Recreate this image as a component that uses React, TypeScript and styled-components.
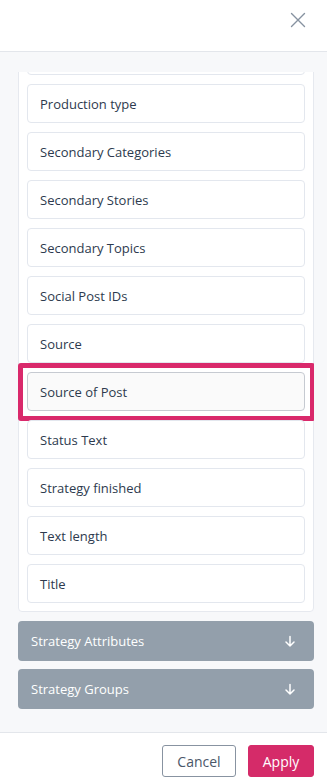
import React, {useLayoutEffect, useRef} from 'react';
import styled, {createGlobalStyle} from 'styled-components';

const GlobalStyle = createGlobalStyle`
    html, body {
        margin: 0;
        padding: 0;
        background: #fff;
    }
    body {
        font-family: "Open Sans", "Noto Sans", sans-serif;
        -webkit-font-smoothing: antialiased;
    }
`;

const Page = styled.div`
    width: 327px;
    height: 780px;
    display: flex;
    flex-direction: column;
    overflow: hidden;
    background: #fff;
`;

const Header = styled.header`
    height: 52px;
    flex: none;
    display: flex;
    align-items: flex-start;
    justify-content: flex-end;
    border-bottom: 1px solid #e3e6eb;
    padding: 12px 21px 0 0;
    box-sizing: border-box;
`;

const CloseButton = styled.button`
    border: 0;
    background: none;
    padding: 0;
    width: 16px;
    height: 16px;
    cursor: pointer;
    display: flex;
`;

const Body = styled.div`
    flex: 1;
    background: #f7f8fa;
    padding: 20px 13px 23px 18px;
    display: flex;
    flex-direction: column;
    gap: 8px;
    min-height: 0;
`;

const ScrollArea = styled.div`
    height: 540px;
    flex: none;
    overflow-y: auto;
    scrollbar-width: none;
    margin-bottom: 1px;
    &::-webkit-scrollbar { display: none; }
`;

const Panel = styled.div`
    background: #fff;
    border: 1px solid #e6e9ef;
    border-radius: 4px;
    padding: 8px;
    display: flex;
    flex-direction: column;
    gap: 9px;
`;

const Item = styled.div<{$active?: boolean}>`
    position: relative;
    height: 39px;
    box-sizing: border-box;
    border: 1px solid ${p => p.$active ? '#c6cad1' : '#e3e7ee'};
    background: ${p => p.$active ? '#fafafa' : '#fff'};
    border-radius: 4px;
    padding: 0 12px;
    display: flex;
    align-items: center;
    font-size: 13px;
    color: #2d3a4e;
`;

const Highlight = styled.span`
    position: absolute;
    left: -10px;
    right: -11px;
    top: -10px;
    bottom: -11px;
    border: 5px solid #d9296b;
    border-radius: 3px;
    pointer-events: none;
`;

const Section = styled.button`
    height: 40px;
    flex: none;
    border: 0;
    border-radius: 4px;
    background: #939fab;
    color: #fff;
    font-family: inherit;
    font-size: 13px;
    display: flex;
    align-items: center;
    justify-content: space-between;
    padding: 0 18px 0 13px;
    cursor: pointer;
`;

const Footer = styled.footer`
    flex: none;
    height: 48px;
    box-sizing: border-box;
    border-top: 1px solid #e3e6eb;
    padding: 12px 13px 0 0;
    display: flex;
    justify-content: flex-end;
    gap: 12px;
`;

const Button = styled.button<{$primary?: boolean}>`
    height: 32px;
    box-sizing: border-box;
    border-radius: 3px;
    font-family: inherit;
    font-size: 14px;
    cursor: pointer;
    padding: 0;
    border: 1px solid ${p => p.$primary ? '#d52b69' : '#8893a1'};
    background: ${p => p.$primary ? '#d52b69' : '#fff'};
    color: ${p => p.$primary ? '#fff' : '#4b5769'};
    width: ${p => p.$primary ? '66px' : '74px'};
`;

const fields = [
    'Priority',
    'Primary Topic',
    'Primary Story',
    'Production type',
    'Secondary Categories',
    'Secondary Stories',
    'Secondary Topics',
    'Social Post IDs',
    'Source',
    'Source of Post',
    'Status Text',
    'Strategy finished',
    'Text length',
    'Title',
];

const DownArrow = () => (
    <svg width="12" height="14" viewBox="0 0 12 14" fill="none" stroke="#fff" strokeWidth="1.5" strokeLinecap="round" strokeLinejoin="round">
        <path d="M6 2.5v9.5M2 8l4 4 4-4" />
    </svg>
);

const App = () => {
    const scrollRef = useRef<HTMLDivElement>(null);

    useLayoutEffect(() => {
        if (scrollRef.current) scrollRef.current.scrollTop = scrollRef.current.scrollHeight;
    }, []);

    return (
        <Page>
            <GlobalStyle />
            <Header>
                <CloseButton aria-label="Close">
                    <svg width="16" height="16" viewBox="0 0 16 16" stroke="#8692a0" strokeWidth="1.4" strokeLinecap="round">
                        <path d="M1.5 1.5l13 13M14.5 1.5l-13 13" />
                    </svg>
                </CloseButton>
            </Header>
            <Body>
                <ScrollArea ref={scrollRef}>
                    <Panel>
                        {fields.map(f => (
                            <Item key={f} $active={f === 'Source of Post'}>
                                {f}
                                {f === 'Source of Post' && <Highlight />}
                            </Item>
                        ))}
                    </Panel>
                </ScrollArea>
                <Section>Strategy Attributes<DownArrow /></Section>
                <Section>Strategy Groups<DownArrow /></Section>
            </Body>
            <Footer>
                <Button>Cancel</Button>
                <Button $primary>Apply</Button>
            </Footer>
        </Page>
    );
};

export default App;
